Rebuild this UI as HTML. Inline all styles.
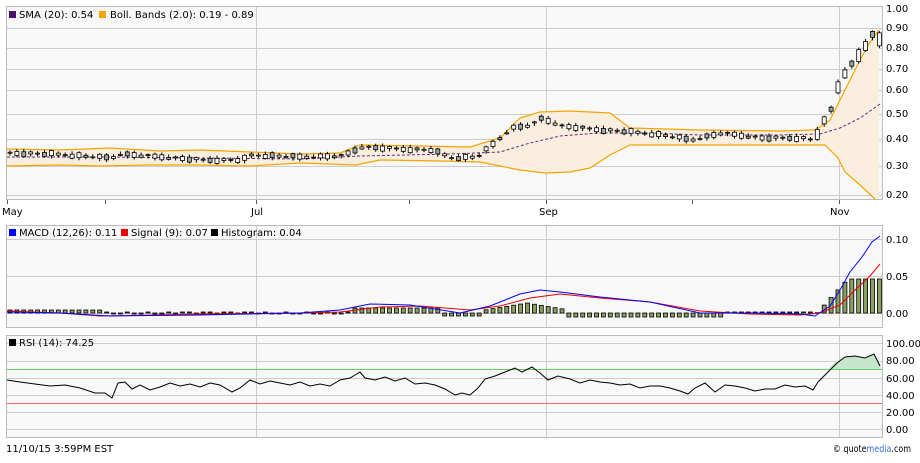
<!DOCTYPE html>
<html><head><meta charset="utf-8"><style>
body{margin:0;background:#fff;width:920px;height:458px;overflow:hidden;font-family:"Liberation Sans","DejaVu Sans",sans-serif}
svg text{font-family:"DejaVu Sans","Liberation Sans",sans-serif;font-size:10px;fill:#000}
</style></head><body>
<svg id="s" width="920" height="458" xmlns="http://www.w3.org/2000/svg">
<rect x="6.5" y="6.5" width="876" height="193" fill="#f8f8f8" stroke="#bbb"/>
<g stroke="#ccc" stroke-width="1">
<line x1="7" y1="28.5" x2="882" y2="28.5"/><line x1="7" y1="48.5" x2="882" y2="48.5"/>
<line x1="7" y1="69.5" x2="882" y2="69.5"/><line x1="7" y1="90.5" x2="882" y2="90.5"/>
<line x1="7" y1="114.5" x2="882" y2="114.5"/><line x1="7" y1="139.5" x2="882" y2="139.5"/>
<line x1="7" y1="166.5" x2="882" y2="166.5"/><line x1="7" y1="195.5" x2="882" y2="195.5"/>
<line x1="256.5" y1="7" x2="256.5" y2="199"/><line x1="546.5" y1="7" x2="546.5" y2="199"/><line x1="839.5" y1="7" x2="839.5" y2="199"/>
</g>
<g stroke="#555"><line x1="7.5" y1="200" x2="7.5" y2="204"/><line x1="105.5" y1="200" x2="105.5" y2="204"/><line x1="256.5" y1="200" x2="256.5" y2="204"/><line x1="409.5" y1="200" x2="409.5" y2="204"/><line x1="546.5" y1="200" x2="546.5" y2="204"/><line x1="692.5" y1="200" x2="692.5" y2="204"/><line x1="839.5" y1="200" x2="839.5" y2="204"/></g>
<polygon fill="#faefdf" points="7,149 60,150 110,148 160,151 200,150 250,152 300,154 340,153 360,145 420,146 470,147 500,138 520,118 540,112 570,111 610,113 630,128 700,130 780,131 815,130 830,120 840,100 850,80 860,60 870,42 879,30 879,199 875,199 860,185 845,172 838,158 825,145 810,145 700,145 630,145 610,155 590,168 570,172 545,173 520,170 500,166 480,162 440,161 380,160 356,165 300,163 250,166 200,165 150,165 100,166 60,165 7,166"/>
<polyline fill="none" stroke="#f5a500" stroke-width="1.2" points="7,149 60,150 110,148 160,151 200,150 250,152 300,154 340,153 360,145 420,146 470,147 500,138 520,118 540,112 570,111 610,113 630,128 700,130 780,131 815,130 830,120 840,100 850,80 860,60 870,42 879,30"/>
<polyline fill="none" stroke="#f5a500" stroke-width="1.2" points="7,166 60,165 100,166 150,165 200,165 250,166 300,163 356,165 380,160 440,161 480,162 500,166 520,170 545,173 570,172 590,168 610,155 630,145 700,145 810,145 825,145 838,158 845,172 860,185 875,199"/>
<polyline fill="none" stroke="#5a2d82" stroke-width="1" stroke-dasharray="3,2" points="7,157 100,157 200,158 300,159 360,156 450,154 500,152 530,143 560,136 600,133 650,133 700,135 780,135 820,134 840,128 860,118 880,104"/>
<g id="candles"></g>
<rect x="9" y="11" width="7" height="7" fill="#4b0f6e"/><text x="19" y="18">SMA (20): 0.54</text>
<rect x="99" y="11" width="7" height="7" fill="#f5a500"/><text x="110" y="18">Boll. Bands (2.0): 0.19 - 0.89</text>
<g><text x="886" y="12">1.00</text><text x="886" y="31">0.90</text><text x="886" y="51">0.80</text><text x="886" y="72">0.70</text><text x="886" y="93">0.60</text><text x="886" y="117">0.50</text><text x="886" y="142">0.40</text><text x="886" y="169">0.30</text><text x="886" y="198">0.20</text></g>
<text x="2" y="215">May</text><text x="251" y="215">Jul</text><text x="539" y="215">Sep</text><text x="830" y="215">Nov</text>

<rect x="6.5" y="225.5" width="876" height="102" fill="#f8f8f8" stroke="#bbb"/>
<g stroke="#ccc"><line x1="7" y1="239.5" x2="882" y2="239.5"/><line x1="7" y1="276.5" x2="882" y2="276.5"/><line x1="7" y1="313.5" x2="882" y2="313.5"/>
<line x1="256.5" y1="226" x2="256.5" y2="327"/><line x1="546.5" y1="226" x2="546.5" y2="327"/><line x1="839.5" y1="226" x2="839.5" y2="327"/></g>
<g id="hist"></g>
<polyline fill="none" stroke="#e00" stroke-width="1" points="7,311 60,313 100,316 200,314 300,313 340,312 380,307 420,306 470,310 500,306 530,298 560,294 600,298 650,302 700,311 750,314 800,315 820,313 840,305 855,290 870,276 880,264"/>
<polyline fill="none" stroke="#00f" stroke-width="1" points="7,312 60,313 110,316 200,315 300,313 340,310 370,304 410,305 460,313 490,306 520,294 540,290 560,292 600,297 650,302 700,313 750,313 800,314 815,316 830,306 840,290 850,272 862,257 872,242 880,236"/>
<rect x="9" y="229" width="7" height="7" fill="#00f"/><text x="19" y="236">MACD (12,26): 0.11</text>
<rect x="121" y="229" width="7" height="7" fill="#e00"/><text x="131" y="236">Signal (9): 0.07</text>
<rect x="211" y="229" width="7" height="7" fill="#000"/><text x="221" y="236">Histogram: 0.04</text>
<text x="886" y="243">0.10</text><text x="886" y="280">0.05</text><text x="886" y="317">0.00</text>

<rect x="6.5" y="335.5" width="876" height="102" fill="#f8f8f8" stroke="#bbb"/>
<g stroke="#ccc"><line x1="7" y1="343.5" x2="882" y2="343.5"/><line x1="7" y1="361.5" x2="882" y2="361.5"/><line x1="7" y1="378.5" x2="882" y2="378.5"/><line x1="7" y1="395.5" x2="882" y2="395.5"/><line x1="7" y1="412.5" x2="882" y2="412.5"/><line x1="7" y1="429.5" x2="882" y2="429.5"/>
<line x1="256.5" y1="336" x2="256.5" y2="437"/><line x1="546.5" y1="336" x2="546.5" y2="437"/><line x1="839.5" y1="336" x2="839.5" y2="437"/></g>
<line x1="7" y1="369.5" x2="882" y2="369.5" stroke="#6c6"/>
<line x1="7" y1="403.5" x2="882" y2="403.5" stroke="#f66"/>
<polygon fill="#c6e6cc" points="828,369 835,362 845,357 855,356 865,358 874,354 878,360 881,369"/>
<polyline fill="none" stroke="#000" stroke-width="1" points="7,380 20,382 35,384 50,386 65,385 80,388 95,393 105,393 112,398 118,383 125,382 132,389 140,385 150,390 160,387 170,383 180,386 190,384 200,387 210,383 220,385 232,392 240,388 250,380 260,384 270,381 280,383 290,385 300,382 310,386 320,384 330,386 340,380 350,378 360,372 365,378 375,380 385,377 395,381 405,378 415,384 425,383 435,385 445,389 455,395 462,393 470,395 478,388 485,379 495,376 505,372 515,368 522,372 532,367 540,373 548,380 558,376 570,379 580,383 590,380 600,382 610,383 620,385 630,384 640,388 650,386 660,386 670,388 680,391 688,394 695,388 705,383 715,392 725,385 735,386 745,388 755,391 765,389 775,389 785,385 795,387 805,386 813,390 818,382 828,372 837,363 845,357 855,356 865,358 874,354 880,366"/>
<rect x="9" y="339" width="7" height="7" fill="#000"/><text x="19" y="346">RSI (14): 74.25</text>
<text x="886" y="347">100.00</text><text x="886" y="364">80.00</text><text x="886" y="382">60.00</text><text x="886" y="399">40.00</text><text x="886" y="416">20.00</text><text x="886" y="433">0.00</text>

<text x="6" y="452">11/10/15 3:59PM EST</text>
<text x="833" y="452" textLength="78" lengthAdjust="spacingAndGlyphs">© quote<tspan fill="#3a6fd8">media</tspan>.com</text>
</svg>
<script>
(function(){
var ns="http://www.w3.org/2000/svg";
var kp=[[8,153],[50,154],[110,158],[118,154],[160,157],[200,160],[240,160],[250,155],[300,157],[340,156],[360,147],[400,149],[430,150],[450,158],[475,157],[490,145],[510,128],[530,125],[540,118],[560,126],[600,130],[620,131],[660,135],[690,140],[720,133],[760,138],[800,138],[812,140],[820,125],[830,108],[838,80],[845,70],[855,58],[862,48],[870,35],[878,40]];
function f(x){for(var i=0;i<kp.length-1;i++){if(x<=kp[i+1][0]){var t=(x-kp[i][0])/(kp[i+1][0]-kp[i][0]);return kp[i][1]+t*(kp[i+1][1]-kp[i][1]);}}return kp[kp.length-1][1];}
var g=document.getElementById("candles"),h=document.getElementById("hist");
var n=0;
for(var x=8;x<=878;x+=6.9){n++;var y=f(x);var j=((n*37)%7)-3;var hh=(n%4==1)?1:2+((n*13)%4);
 if(x>815)hh=4+((n*7)%10);
 var l=document.createElementNS(ns,"line");l.setAttribute("x1",x+2);l.setAttribute("x2",x+2);l.setAttribute("y1",y-hh/2-2);l.setAttribute("y2",y+hh/2+2);l.setAttribute("stroke","#000");g.appendChild(l);
 var r=document.createElementNS(ns,"rect");r.setAttribute("x",x);r.setAttribute("y",y-hh/2+j*0.3);r.setAttribute("width",4);r.setAttribute("height",Math.max(1,hh));r.setAttribute("fill",n%3==0?"#9aa":"#fff");r.setAttribute("stroke","#000");r.setAttribute("stroke-width","0.8");g.appendChild(r);
 var hv;
 if(x<100)hv=-3;else if(x<350)hv=(x%20<10)?-1:1;else if(x<440)hv=-5;else if(x<480)hv=3;else if(x<560)hv=-10+(Math.abs(x-525)/6);else if(x<720)hv=4;else if(x<815)hv=-1;else hv=-Math.min(34,(x-815)*1.1);
 var hr=document.createElementNS(ns,"rect");hr.setAttribute("x",x);hr.setAttribute("width",4);
 if(hv<0){hr.setAttribute("y",313+hv);hr.setAttribute("height",-hv);}else{hr.setAttribute("y",313);hr.setAttribute("height",hv);}
 hr.setAttribute("fill","#8aa060");hr.setAttribute("stroke","#000");hr.setAttribute("stroke-width","0.8");h.appendChild(hr);
}
})();
</script>
</body></html>
